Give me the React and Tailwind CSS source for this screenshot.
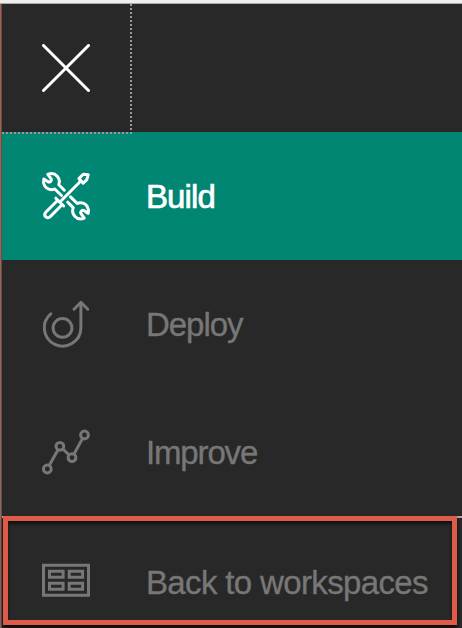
function CloseIcon() {
  return (
    <svg className="h-12 w-12" viewBox="0 0 48 48" fill="none" stroke="currentColor" strokeWidth="3" strokeLinecap="round">
      <path d="M1.5 1.5 46.5 46.5M46.5 1.5 1.5 46.5" />
    </svg>
  );
}

function ToolsIcon() {
  const wrench =
    "M19.5 23.5 12.8 17C8.5 18.8 4.5 16.7 2.8 14 1.5 11.8 1.2 9.3 1.8 7L6 9.8C7.8 10.6 9.7 9 9.3 7.2L5.8 2.3C9.3.9 13 1.7 15.2 4.2 17.5 6.7 17.9 9.5 16.8 12.8L22.3 18.2";
  return (
    <svg className="h-12 w-12 overflow-visible" viewBox="0 0 48 48" fill="none" stroke="currentColor" strokeWidth="3" strokeLinejoin="round" strokeLinecap="round">
      <path d={wrench} />
      <path d={wrench} transform="rotate(180 24 24.2)" />
      <path d="M36.9 6.6 41.2 2.3 46.2 2.8 44.7 7.8 41.2 11.1ZM38.8 9 18.7 29.2" />
      <path d="M13.8 26.2 21.7 34M15.5 28.5 4.2 39.8C.6 43.5 4.8 48 8.5 44.4L19.8 33" />
    </svg>
  );
}

function DeployIcon() {
  return (
    <svg className="h-12 w-12 overflow-visible" viewBox="0 0 48 48" fill="none" stroke="currentColor" strokeWidth="3" strokeLinecap="round" strokeLinejoin="round">
      <circle cx="20.5" cy="27.9" r="9.4" />
      <path d="M8.8 13.8A18.3 18.3 0 1 0 38.9 28V3M32 9.2 38.9 2.3 45.8 9.2" />
    </svg>
  );
}

function ImproveIcon() {
  return (
    <svg className="h-12 w-12 overflow-visible" viewBox="0 0 48 48" fill="none" stroke="currentColor" strokeWidth="3">
      <circle cx="5.3" cy="41" r="3.9" />
      <circle cx="17.9" cy="18.3" r="3.9" />
      <circle cx="30" cy="29.6" r="3.9" />
      <circle cx="42.5" cy="7" r="3.9" />
      <path d="M7.2 37.6 16 21.7M20.8 21 27.1 26.9M31.9 26.2 40.6 10.4" />
    </svg>
  );
}

function WorkspacesIcon() {
  return (
    <svg className="h-12 w-12" viewBox="0 0 48 48" fill="none" stroke="currentColor" strokeWidth="3">
      <path d="M1.5 7.3H46.5V37.3H1.5Z" />
      <path d="M7.5 13.3H21.1V19.3H7.5ZM27.2 13.3H40.6V19.3H27.2ZM7.5 25.3H21.1V31.3H7.5ZM27.2 25.3H40.6V31.3H27.2Z" />
    </svg>
  );
}

function NavItem({ icon, label, active, tracking }) {
  return (
    <a className={`flex h-32 items-center pl-10 ${active ? "bg-[#008673] text-white" : "text-[#777]"}`}>
      {icon}
      <span className={`mt-0.5 ml-14 text-[33px] leading-10 whitespace-nowrap ${tracking} ${active ? "[-webkit-text-stroke:0.7px]" : "[-webkit-text-stroke:0.35px]"}`}>
        {label}
      </span>
    </a>
  );
}

export default function App() {
  return (
    <div className="h-[628px] w-[462px] overflow-hidden bg-[#282828] font-['Liberation_Sans',Arial,sans-serif]">
      <div className="h-1 border-b border-[#aaa] bg-[#eee]" />
      <div className="flex h-[624px]">
        <div className="w-0.5 shrink-0 border-r border-[#70493f] bg-linear-to-b from-[#996657] to-[#806c6c]" />
        <nav className="min-w-0 grow">
          <div className="relative flex h-32 items-center pl-10 text-white">
            <CloseIcon />
            <div className="absolute top-0 left-32 h-32 w-0.5 bg-[repeating-linear-gradient(to_bottom,#999_0_2px,transparent_2px_4px)]" />
            <div className="absolute top-32 left-0 h-0.5 w-[130px] bg-[repeating-linear-gradient(to_right,#999_0_2px,transparent_2px_4px)]" />
          </div>
          <NavItem icon={<ToolsIcon />} label="Build" tracking="tracking-[-0.9px]" active />
          <NavItem icon={<DeployIcon />} label="Deploy" tracking="tracking-[-1.05px]" />
          <NavItem icon={<ImproveIcon />} label="Improve" tracking="tracking-[-1.15px]" />
          <div className="relative h-28 border-t-2 border-[#aaa]">
            <NavItem icon={<WorkspacesIcon />} label="Back to workspaces" tracking="tracking-[-0.64px]" />
            <div className="absolute -top-0.5 left-px h-[109px] w-[454px] border-5 border-[#df5a49] shadow-[0_3px_3px_#100b0b,inset_0_3px_3px_#111]" />
          </div>
        </nav>
      </div>
    </div>
  );
}
